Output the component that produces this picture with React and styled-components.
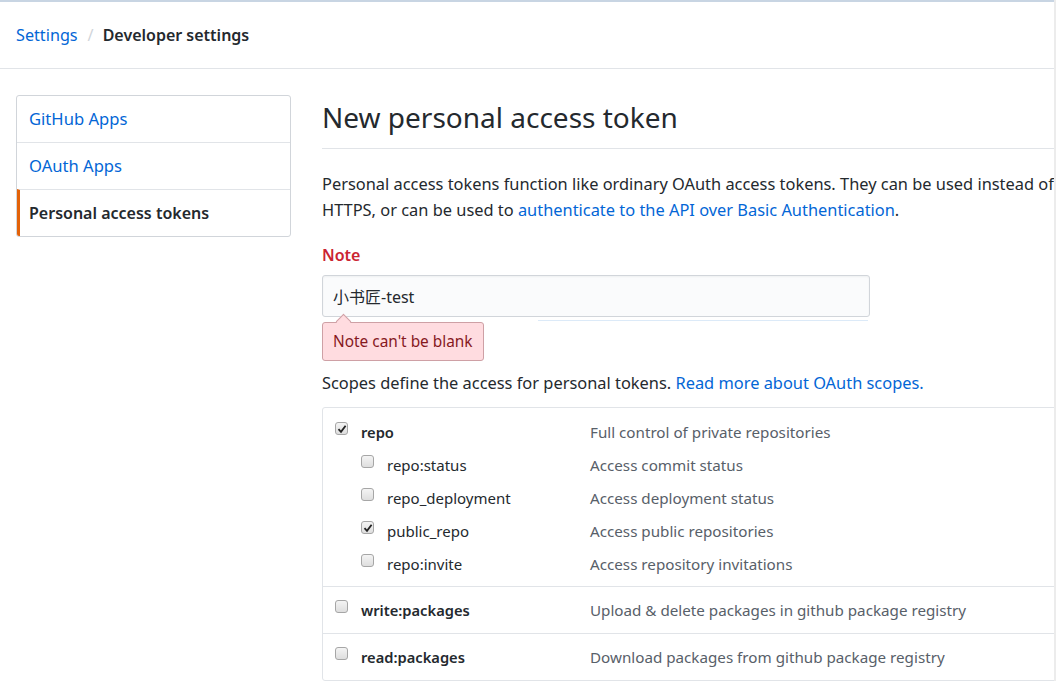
import React from "react";
import styled, { createGlobalStyle } from "styled-components";

const GlobalStyle = createGlobalStyle`
  html, body {
    margin: 0;
    padding: 0;
    overflow: hidden;
    background: #fff;
  }
  body {
    font-family: "Noto Sans", "Noto Sans CJK SC", sans-serif;
    color: #24292e;
  }
`;

const Shell = styled.div`
  display: flex;
  width: 1056px;
  height: 681px;
`;

const Page = styled.div`
  flex: 1;
  min-width: 0;
  overflow: hidden;
  border-top: 2px solid #c8d5e3;
`;

const ScrollEdge = styled.div`
  width: 2px;
  background: #ececec;
`;

const Header = styled.div`
  height: 66px;
  display: flex;
  align-items: center;
  padding-left: 16px;
  border-bottom: 1px solid #e1e4e8;
  font-size: 16.2px;
`;

const Crumb = styled.a`
  color: #0366d6;
  text-decoration: none;
`;

const Sep = styled.span`
  color: #d1d5da;
  margin: 0 9px 0 10px;
`;

const Current = styled.span`
  font-weight: 600;
  font-size: 16px;
`;

const Body = styled.div`
  display: flex;
  align-items: flex-start;
  gap: 31px;
  padding: 26px 0 0 16px;
`;

const Menu = styled.nav`
  width: 273px;
  flex-shrink: 0;
  border: 1px solid #d1d5da;
  border-radius: 3px;
  overflow: hidden;
`;

const MenuItem = styled.a`
  display: flex;
  align-items: center;
  height: 45px;
  padding-left: ${(p) => (p.$selected ? "9px" : "12px")};
  padding-bottom: 1px;
  border-left: ${(p) => (p.$selected ? "3px solid #e36209" : "none")};
  border-top: ${(p) => (p.$first ? "none" : "1px solid #e1e4e8")};
  color: ${(p) => (p.$selected ? "#24292e" : "#0366d6")};
  font-weight: ${(p) => (p.$selected ? 600 : 400)};
  font-size: ${(p) => (p.$selected ? "16px" : "16.6px")};
  text-decoration: none;
`;

const Main = styled.main`
  width: 960px;
  flex-shrink: 0;
`;

const TitleBar = styled.div`
  padding-bottom: 8px;
  border-bottom: 1px solid #e1e4e8;
`;

const Title = styled.h1`
  margin: 0;
  font-size: 28px;
  font-weight: 400;
  line-height: 45px;
`;

const Para = styled.p`
  margin: 22px 0 0;
  font-size: 16.4px;
  line-height: 26px;
`;

const Link = styled.a`
  color: #0366d6;
  text-decoration: none;
`;

const Label = styled.div`
  margin-top: 20px;
  font-size: 16px;
  line-height: 24px;
  font-weight: 600;
  color: #cb2431;
`;

const Input = styled.div`
  position: relative;
  margin-top: 8px;
  width: 536px;
  height: 40px;
  display: flex;
  align-items: center;
  padding-left: 10px;
  background: #fafbfc;
  border: 1px solid #d1d5da;
  border-radius: 3px;
  font-size: 16px;
  box-shadow: inset 0 1px 2px rgba(27, 31, 35, 0.05);

  &::after {
    content: "";
    position: absolute;
    left: 215px;
    right: 1px;
    bottom: -5px;
    height: 1px;
    background: #dceaf8;
  }
`;

const ErrorTip = styled.div`
  position: relative;
  margin-top: 5px;
  display: inline-flex;
  align-items: center;
  height: 37px;
  padding: 0 10px;
  background: #ffdce0;
  border: 1px solid #cea0a5;
  border-radius: 3px;
  color: #86181d;
  font-size: 15.4px;

  &::before {
    content: "";
    position: absolute;
    top: -7px;
    left: 15px;
    width: 10px;
    height: 10px;
    background: #ffdce0;
    border-left: 1px solid #cea0a5;
    border-top: 1px solid #cea0a5;
    transform: rotate(45deg);
  }
`;

const Scopes = styled.p`
  margin: 10px 0 0;
  font-size: 16.4px;
  line-height: 24px;
`;

const ScopeBox = styled.div`
  margin-top: 12px;
  border: 1px solid #e1e4e8;
  border-radius: 3px;
`;

const Group = styled.div`
  padding: ${(p) => (p.$tall ? "7px 0 6px" : "6px 0 7px")};
  border-top: ${(p) => (p.$first ? "none" : "1px solid #e1e4e8")};
`;

const Row = styled.div`
  display: flex;
  align-items: center;
  height: 33px;
  font-size: 15px;
`;

const Left = styled.div`
  width: 267px;
  flex-shrink: 0;
  display: flex;
  align-items: center;
  gap: 13px;
  padding-left: ${(p) => (p.$child ? "38px" : "12px")};
  box-sizing: border-box;
`;

const Box = styled.span`
  width: 13px;
  height: 13px;
  box-sizing: border-box;
  border: 1px solid #a6a6a6;
  border-radius: 3px;
  background: linear-gradient(#f4f4f4, #dedede);
  display: inline-flex;
  align-items: center;
  justify-content: center;
  margin-top: -6px;
`;

const ScopeName = styled.span`
  font-weight: ${(p) => (p.$bold ? 600 : 400)};
  font-size: ${(p) => (p.$bold ? "14.7px" : "15px")};
`;

const Desc = styled.span`
  color: #586069;
  font-size: 15.2px;
`;

function Check({ checked }) {
  return (
    <Box>
      {checked && (
        <svg width="10" height="10" viewBox="0 0 10 10">
          <path d="M1.5 5.2 L4 7.8 L8.6 1.8" fill="none" stroke="#222" strokeWidth="1.8" />
        </svg>
      )}
    </Box>
  );
}

function Scope({ name, desc, checked, child, bold }) {
  return (
    <Row>
      <Left $child={child}>
        <Check checked={checked} />
        <ScopeName $bold={bold}>{name}</ScopeName>
      </Left>
      <Desc>{desc}</Desc>
    </Row>
  );
}

const repoChildren = [
  { name: "repo:status", desc: "Access commit status" },
  { name: "repo_deployment", desc: "Access deployment status" },
  { name: "public_repo", desc: "Access public repositories", checked: true },
  { name: "repo:invite", desc: "Access repository invitations" },
];

export default function App() {
  return (
    <>
      <GlobalStyle />
      <Shell>
        <Page>
          <Header>
            <Crumb href="#">Settings</Crumb>
            <Sep>/</Sep>
            <Current>Developer settings</Current>
          </Header>
          <Body>
            <Menu>
              <MenuItem href="#" $first>GitHub Apps</MenuItem>
              <MenuItem href="#">OAuth Apps</MenuItem>
              <MenuItem href="#" $selected>Personal access tokens</MenuItem>
            </Menu>
            <Main>
              <TitleBar>
                <Title>New personal access token</Title>
              </TitleBar>
              <Para>
                Personal access tokens function like ordinary OAuth access tokens. They can be used instead of a password for Git over
                <br />
                HTTPS, or can be used to <Link href="#">authenticate to the API over Basic Authentication</Link>.
              </Para>
              <Label>Note</Label>
              <Input>小书匠-test</Input>
              <ErrorTip>Note can't be blank</ErrorTip>
              <Scopes>
                Scopes define the access for personal tokens. <Link href="#">Read more about OAuth scopes.</Link>
              </Scopes>
              <ScopeBox>
                <Group $first $tall>
                  <Scope name="repo" desc="Full control of private repositories" checked bold />
                  {repoChildren.map((s) => (
                    <Scope key={s.name} {...s} child />
                  ))}
                </Group>
                <Group>
                  <Scope name="write:packages" desc="Upload & delete packages in github package registry" bold />
                </Group>
                <Group>
                  <Scope name="read:packages" desc="Download packages from github package registry" bold />
                </Group>
              </ScopeBox>
            </Main>
          </Body>
        </Page>
        <ScrollEdge />
      </Shell>
    </>
  );
}
